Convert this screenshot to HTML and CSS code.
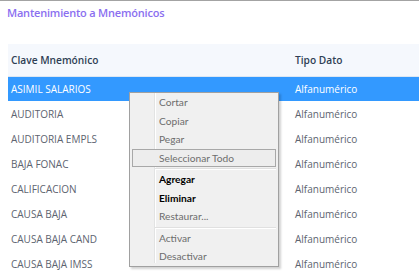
FILE: index.html
```html
<!DOCTYPE html>
<html lang="es">
<head>
<meta charset="UTF-8" />
<title>Mantenimiento a Mnemónicos</title>
<link rel="stylesheet" href="styles.css">
</head>
<body>
  <div class="page">
    <h1 class="title">Mantenimiento a Mnemónicos</h1>

    <table class="grid">
      <thead>
        <tr>
          <th class="col-key">Clave Mnemónico</th>
          <th>Tipo Dato</th>
        </tr>
      </thead>
      <tbody>
        <tr class="selected"><td>ASIMIL SALARIOS</td><td>Alfanumérico</td></tr>
        <tr><td>AUDITORIA</td><td>Alfanumérico</td></tr>
        <tr><td>AUDITORIA EMPLS</td><td>Alfanumérico</td></tr>
        <tr><td>BAJA FONAC</td><td>Alfanumérico</td></tr>
        <tr><td>CALIFICACION</td><td>Alfanumérico</td></tr>
        <tr><td>CAUSA BAJA</td><td>Alfanumérico</td></tr>
        <tr><td>CAUSA BAJA CAND</td><td>Alfanumérico</td></tr>
        <tr><td>CAUSA BAJA IMSS</td><td>Alfanumérico</td></tr>
      </tbody>
    </table>

    <!-- context menu -->
    <ul class="menu">
      <li class="disabled">Cortar</li>
      <li class="disabled">Copiar</li>
      <li class="disabled">Pegar</li>
      <li class="disabled hover">Seleccionar Todo</li>
      <li class="sep"></li>
      <li class="strong">Agregar</li>
      <li class="strong">Eliminar</li>
      <li class="disabled">Restaurar...</li>
      <li class="sep"></li>
      <li class="disabled">Activar</li>
      <li class="disabled">Desactivar</li>
    </ul>
  </div>
</body>
</html>
```

FILE: styles.css
```css
/* Base */
* {
  box-sizing: border-box;
}
body {
  margin: 0;
  font-family: 'Open Sans', 'Noto Sans', sans-serif;
  background: #fff;
  overflow: hidden;
}
.page {
  position: relative;
  border-top: 1px solid #a3a3a3;
  height: 276px;
}
.title {
  margin: 0;
  padding: 4px 0 0 7px;
  height: 43px;
  font-size: 11px;
  font-weight: 600;
  color: #8b6ff0;
  letter-spacing: -0.2px;
}
/* Grid */
.grid {
  margin-left: 8px;
  width: 430px;
  border-collapse: collapse;
  font-size: 10px;
}
.grid th {
  height: 32px;
  padding: 0 3px;
  text-align: left;
  font-size: 10.2px;
  font-weight: 600;
  color: #2f3f55;
  background: #f5f8fd;
  border-bottom: 1px solid #dce7f3;
}
.grid .col-key {
  width: 284px;
}
.grid td {
  height: 25px;
  padding: 1px 3px 0;
  color: #5d6470;
}
.grid tr.selected td {
  background: #3399ff;
  color: #fff;
}
/* Context menu */
.menu {
  position: absolute;
  left: 129px;
  top: 91px;
  width: 150px;
  margin: 0;
  padding: 0 2px 0 2px;
  list-style: none;
  background: #f0f0f0;
  border: 1px solid #a0a0a0;
  box-shadow: 2px 2px 2px rgba(0, 0, 0, 0.18);
  font-family: 'Lato', 'Open Sans', sans-serif;
  font-size: 10.2px;
  z-index: 2;
}
.menu::before {
  content: "";
  position: absolute;
  left: 24px;
  top: 0;
  bottom: 3px;
  width: 1px;
  background: #e2e3e3;
  border-right: 1px solid #fff;
}
.menu li {
  position: relative;
  height: 18.5px;
  line-height: 17px;
  padding-left: 26px;
  border: 1px solid transparent;
  color: #000;
}
.menu li.disabled {
  color: #6d6d6d;
}
.menu li.strong {
  font-weight: 700;
}
.menu li.hover {
  border-color: #a8a8a8;
  background: #ededed;
}
.menu li.sep {
  margin: 1px 0 0 23px;
  height: 2px;
  border: none;
  border-top: 1px solid #e0e0e0;
  border-bottom: 1px solid #fff;
}
```
